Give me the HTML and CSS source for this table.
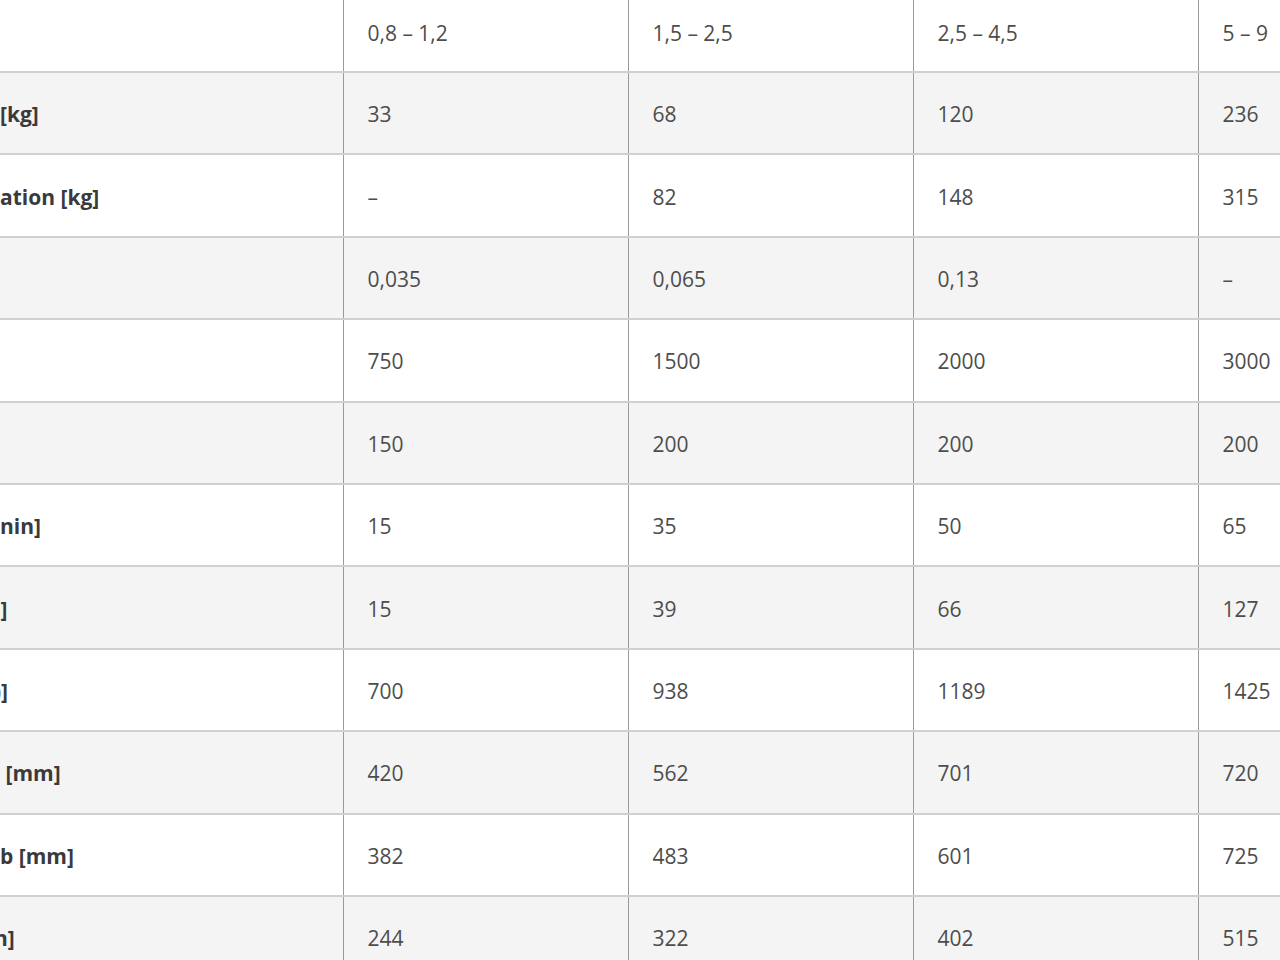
FILE: index.html
```html
<!DOCTYPE html>
<html lang="de">
<head>
<meta charset="utf-8">
<title>Technische Daten</title>
<link rel="stylesheet" href="styles.css">
</head>
<body>
<div class="viewport">
<table class="specs">
  <colgroup>
    <col class="c-label">
    <col class="c-val">
    <col class="c-val">
    <col class="c-val">
    <col class="c-val">
  </colgroup>
  <tr class="head">
    <th class="label"></th>
    <td>0,8 – 1,2</td>
    <td>1,5 – 2,5</td>
    <td>2,5 – 4,5</td>
    <td>5 – 9</td>
  </tr>
  <tr class="alt">
    <th class="label">[kg]</th>
    <td>33</td><td>68</td><td>120</td><td>236</td>
  </tr>
  <tr>
    <th class="label">ation [kg]</th>
    <td>–</td><td>82</td><td>148</td><td>315</td>
  </tr>
  <tr class="alt">
    <th class="label"></th>
    <td>0,035</td><td>0,065</td><td>0,13</td><td>–</td>
  </tr>
  <tr>
    <th class="label"></th>
    <td>750</td><td>1500</td><td>2000</td><td>3000</td>
  </tr>
  <tr class="alt">
    <th class="label cut">]</th>
    <td>150</td><td>200</td><td>200</td><td>200</td>
  </tr>
  <tr>
    <th class="label">nin]</th>
    <td>15</td><td>35</td><td>50</td><td>65</td>
  </tr>
  <tr class="alt">
    <th class="label cut">l]</th>
    <td>15</td><td>39</td><td>66</td><td>127</td>
  </tr>
  <tr>
    <th class="label cut">)]</th>
    <td>700</td><td>938</td><td>1189</td><td>1425</td>
  </tr>
  <tr class="alt">
    <th class="label">&nbsp;[mm]</th>
    <td>420</td><td>562</td><td>701</td><td>720</td>
  </tr>
  <tr>
    <th class="label">b [mm]</th>
    <td>382</td><td>483</td><td>601</td><td>725</td>
  </tr>
  <tr class="alt">
    <th class="label cut">n]</th>
    <td>244</td><td>322</td><td>402</td><td>515</td>
  </tr>
</table>
</div>
</body>
</html>
```

FILE: styles.css
```css
html, body {
  margin: 0;
  padding: 0;
  background: #ffffff;
  overflow: hidden;
}

.viewport {
  width: 1280px;
  height: 960px;
  overflow: hidden;
}

.specs {
  border-collapse: collapse;
  table-layout: fixed;
  width: 1483px;
  font-family: "Open Sans", "Noto Sans", sans-serif;
  font-size: 21px;
  color: #4d4d4d;
}

.c-label {
  width: 343px;
}

.c-val {
  width: 285px;
}

.specs tr {
  height: 82.4px;
}

.specs tr.head {
  height: 72px;
}

.specs tr.alt {
  background: #f4f4f4;
}

.specs th,
.specs td {
  box-sizing: border-box;
  border-bottom: 2px solid #d0d0d0;
  padding: 2px 0 0 24px;
  text-align: left;
  vertical-align: middle;
  white-space: nowrap;
  overflow: hidden;
}

.specs td {
  border-left: 1px solid #9a9a9a;
}

.specs tr.head td,
.specs tr.head th {
  padding-top: 0;
  padding-bottom: 6px;
}

.specs th.label {
  padding-left: 0;
  font-weight: 700;
  color: #3a3a3a;
}

.specs th.cut {
  text-indent: -6px;
}
```
